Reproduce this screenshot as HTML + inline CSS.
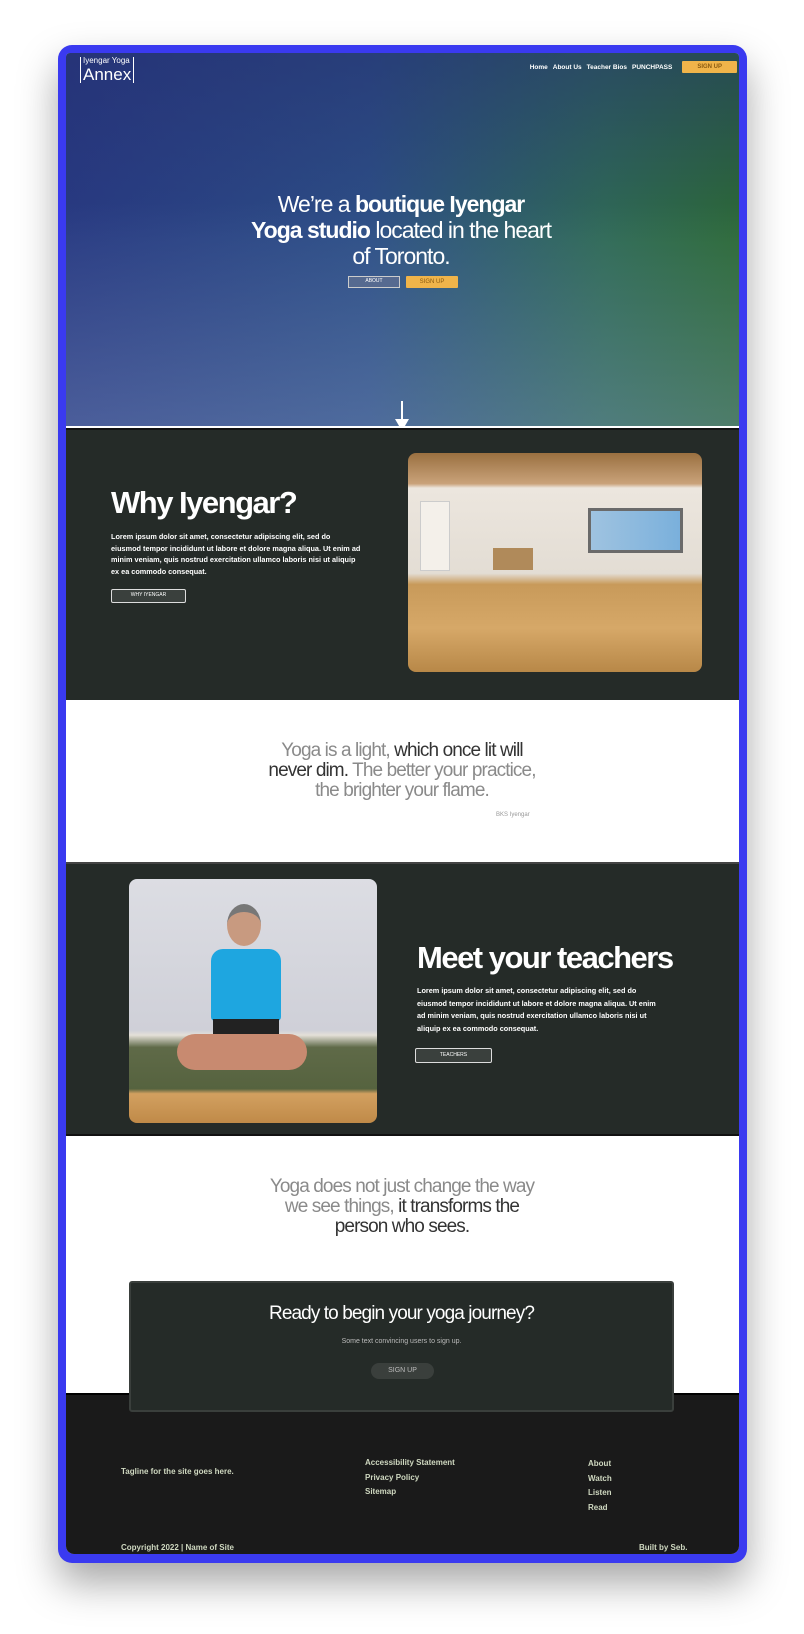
<!DOCTYPE html>
<html><head><meta charset="utf-8">
<style>
*{margin:0;padding:0;box-sizing:border-box}
body{width:804px;height:1634px;background:#fff;font-family:"Liberation Sans",sans-serif;position:relative;overflow:hidden}
.frame{position:absolute;left:58px;top:45px;width:689px;height:1518px;background:#3a3af0;border-radius:14px;box-shadow:0 20px 40px rgba(0,0,0,.35)}
.in{position:absolute;left:66px;top:53px;width:673px;height:1501px;overflow:hidden;border-radius:4px 4px 8px 8px;background:#fff}
.abs{position:absolute}
.hero{left:0;top:0;width:673px;height:373px;background:
linear-gradient(180deg,rgba(0,0,0,0) 40%,rgba(140,160,200,.35) 100%),
linear-gradient(90deg,#283a82 0%,#2d4f86 45%,#2f6a55 80%,#2c6a36 100%)}
.hero2{left:0;top:0;width:673px;height:373px;background:linear-gradient(180deg,rgba(35,45,110,.5),rgba(0,0,0,0) 50%)}
.logo{left:14px;top:4px;color:#fff;border-left:1.5px solid #fff;border-right:1.5px solid #fff;padding:0 2px;line-height:1}
.nav{right:2px;top:8px;display:flex;gap:5px;align-items:center;color:#fff;font-size:6.5px;font-weight:bold}
.btny{background:#f0b44a;color:#8a5a10;font-size:6px;padding:3px 14px;border-radius:1px}
h1{font-weight:normal;color:#fff;font-size:23px;line-height:26px;text-align:center;letter-spacing:-1px}
.dark{background:#252b28}
.p{color:#fff;font-size:7.3px;line-height:12.5px;font-weight:bold}
.ob{border:1.5px solid #ddd;color:#fff;font-size:5px;text-align:center;border-radius:2px;background:#3a403d}
.q{color:#8a8a8a;font-size:19px;line-height:20px;text-align:center;letter-spacing:-.9px}
.q b{color:#333;font-weight:normal}
.foot{color:#cfd8c0;font-size:8px;font-weight:bold}
</style></head><body>
<div class="frame"></div>
<div class="in">
 <div class="abs hero"></div><div class="abs hero2"></div>
 <div class="abs logo"><div style="font-size:8px">Iyengar Yoga</div><div style="font-size:17px;margin-top:1px">Annex</div></div>
 <div class="abs nav"><span>Home</span><span>About Us</span><span>Teacher Bios</span><span>PUNCHPASS</span><span class="btny" style="margin-left:5px;padding:3px 15px">SIGN UP</span></div>
 <h1 class="abs" style="left:185px;top:138px;width:300px">We’re a <b>boutique Iyengar Yoga studio</b> located in the heart of Toronto.</h1>
 <div class="abs" style="left:282px;top:223px;width:52px;height:12px;border:1.5px solid #ccc;background:#566a90;color:#fff;font-size:5px;text-align:center;line-height:9px">ABOUT</div>
 <div class="abs btny" style="left:340px;top:223px;width:52px;height:12px;padding:0;text-align:center;line-height:12px">SIGN UP</div>
 <svg class="abs" style="left:326px;top:348px" width="20" height="34"><path d="M10 0V24" stroke="#fff" stroke-width="2"/><path d="M3 18L10 30L17 18Z" fill="#fff"/></svg>

 <div class="abs dark" style="left:0;top:375px;width:673px;height:272px;border-top:2px solid #111"></div>
 <div class="abs" style="left:342px;top:400px;width:294px;height:219px;border-radius:8px;overflow:hidden;background:linear-gradient(180deg,#9a7040 0%,#c9a27a 14%,#ece6de 16%,#e3ddd4 55%,#c89a5a 60%,#d6a868 80%,#b88848 100%)">
  <div class="abs" style="left:180px;top:55px;width:95px;height:45px;background:linear-gradient(90deg,#9fc3e0,#7ab0dc);border:3px solid #6a6a6a"></div>
  <div class="abs" style="left:12px;top:48px;width:30px;height:70px;background:#f4f0ea;border:1px solid #ccc"></div>
  <div class="abs" style="left:85px;top:95px;width:40px;height:22px;background:#b08a5a"></div>
 </div>
 <div class="abs" style="left:45px;top:432px;color:#fff;font-size:31px;font-weight:bold;letter-spacing:-1.5px">Why Iyengar?</div>
 <div class="abs p" style="left:45px;top:478px;width:250px;line-height:11.5px">Lorem ipsum dolor sit amet, consectetur adipiscing elit, sed do eiusmod tempor incididunt ut labore et dolore magna aliqua. Ut enim ad minim veniam, quis nostrud exercitation ullamco laboris nisi ut aliquip ex ea commodo consequat.</div>
 <div class="abs ob" style="left:45px;top:536px;width:75px;height:14px;line-height:11px">WHY IYENGAR</div>

 <div class="abs" style="left:0;top:647px;width:673px;height:162px;background:#fff"></div>
 <div class="abs q" style="left:196px;top:688px;width:280px">Yoga is a light, <b>which once lit will never dim.</b> The better your practice, the brighter your flame.</div>
 <div class="abs" style="left:430px;top:759px;color:#999;font-size:6px">BKS Iyengar</div>

 <div class="abs dark" style="left:0;top:809px;width:673px;height:274px;border-top:2px solid #444;border-bottom:2px solid #111"></div>
 <div class="abs" style="left:63px;top:826px;width:248px;height:244px;border-radius:8px;overflow:hidden;background:linear-gradient(180deg,#dcdde3 0%,#cfd0d8 62%,#e4e0d8 64%,#5f6a48 69%,#56633f 86%,#d2a060 88%,#c08a48 100%)">
  <div class="abs" style="left:98px;top:25px;width:34px;height:42px;border-radius:50%;background:#c89a80;border-top:8px solid #777"></div>
  <div class="abs" style="left:82px;top:70px;width:70px;height:72px;background:#1ea6e0;border-radius:12px 12px 4px 4px"></div>
  <div class="abs" style="left:84px;top:140px;width:66px;height:28px;background:#222"></div>
  <div class="abs" style="left:48px;top:155px;width:130px;height:36px;border-radius:20px;background:#c88a70"></div>
 </div>
 <div class="abs" style="left:351px;top:887px;color:#fff;font-size:31px;font-weight:bold;letter-spacing:-1.5px">Meet your teachers</div>
 <div class="abs p" style="left:351px;top:932px;width:245px">Lorem ipsum dolor sit amet, consectetur adipiscing elit, sed do eiusmod tempor incididunt ut labore et dolore magna aliqua. Ut enim ad minim veniam, quis nostrud exercitation ullamco laboris nisi ut aliquip ex ea commodo consequat.</div>
 <div class="abs ob" style="left:349px;top:995px;width:77px;height:15px;line-height:12px">TEACHERS</div>

 <div class="abs q" style="left:196px;top:1124px;width:280px"><span>Yoga does not just change the way we see things,</span> <b>it transforms the person who sees.</b></div>

 <div class="abs" style="left:0;top:1340px;width:673px;height:161px;background:#1a1a1a;border-top:2px solid #000"></div>
 <div class="abs dark" style="left:63px;top:1228px;width:545px;height:131px;border:2px solid #3a3f3c;border-radius:3px"></div>
 <div class="abs" style="left:63px;top:1250px;width:545px;text-align:center;color:#fff;font-size:19px;letter-spacing:-.9px">Ready to begin your yoga journey?</div>
 <div class="abs" style="left:63px;top:1285px;width:545px;text-align:center;color:#bbb;font-size:7px">Some text convincing users to sign up.</div>
 <div class="abs" style="left:305px;top:1310px;width:63px;height:16px;border-radius:8px;background:#3a3f3c;color:#bbb;font-size:7px;text-align:center;line-height:16px">SIGN UP</div>

 <div class="abs foot" style="left:55px;top:1414px">Tagline for the site goes here.</div>
 <div class="abs foot" style="left:299px;top:1403px;line-height:14.5px">Accessibility Statement<br>Privacy Policy<br>Sitemap</div>
 <div class="abs foot" style="left:522px;top:1404px;line-height:14.5px">About<br>Watch<br>Listen<br>Read</div>
 <div class="abs foot" style="left:55px;top:1490px">Copyright 2022 | Name of Site</div>
 <div class="abs foot" style="left:573px;top:1490px">Built by Seb.</div>
</div>
</body></html>
